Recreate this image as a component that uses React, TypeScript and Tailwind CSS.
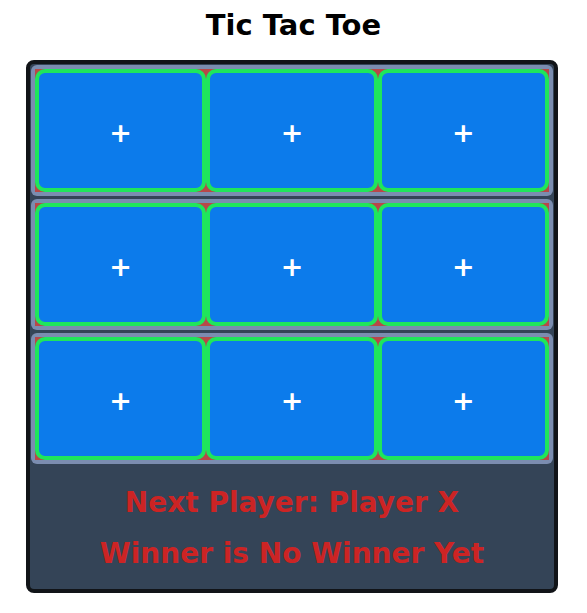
import React from "react";

const rows = [0, 1, 2];
const cols = [0, 1, 2];

export default function App() {
  return (
    <div className="w-[587px] h-[613px] bg-white font-['DejaVu_Sans',sans-serif]">
      <h1 className="pt-[9px] text-center text-[29px] leading-[33px] font-bold text-black">
        Tic Tac Toe
      </h1>
      <div className="mx-[26px] mt-[18px] w-[532px] rounded-lg border-4 border-[#111418] bg-[#344457] p-px">
        <div className="flex flex-col gap-[3px]">
          {rows.map((r) => (
            <div key={r} className="h-[131px] rounded-md bg-[#7b8db0] p-[4px]">
              <div className="flex h-full bg-[#b84848]">
                {cols.map((c) => (
                  <button
                    key={c}
                    className="flex flex-1 items-center justify-center rounded-[10px] border-4 border-[#1fe65c] bg-[#0c7beb] pt-[3px] text-[27px] font-bold leading-none text-white"
                  >
                    +
                  </button>
                ))}
              </div>
            </div>
          ))}
        </div>
        <div className="flex flex-col items-center gap-[19px] pt-[23px] pb-[18px] text-[28px] font-bold leading-[32px] text-[#cc2424]">
          <p>Next Player: Player X</p>
          <p>Winner is No Winner Yet</p>
        </div>
      </div>
    </div>
  );
}
